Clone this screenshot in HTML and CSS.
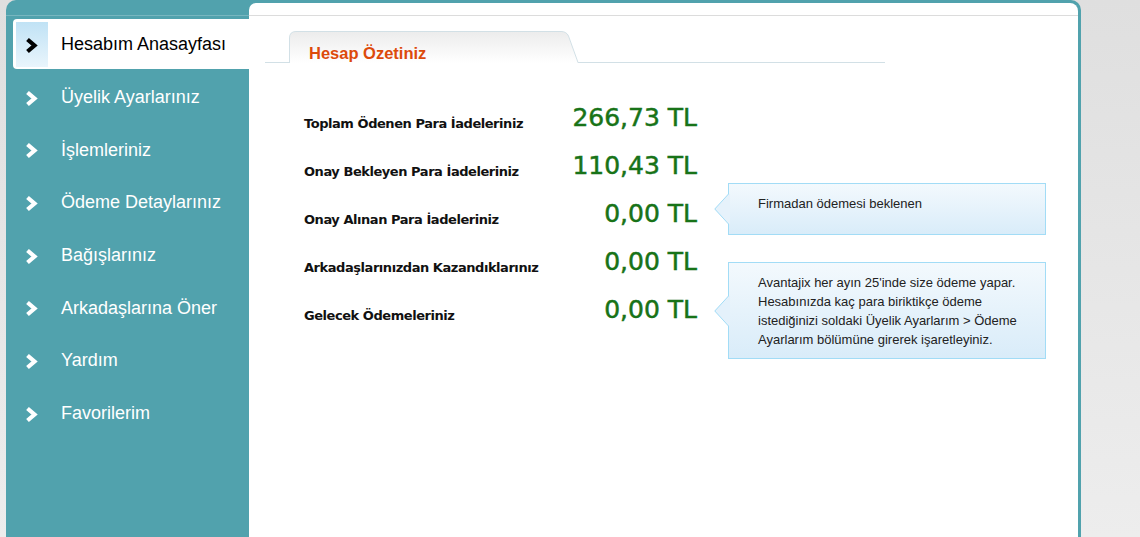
FILE: index.html
```html
<!DOCTYPE html>
<html lang="tr">
<head>
<meta charset="utf-8">
<title>Hesabım</title>
<link rel="stylesheet" href="styles.css">
</head>
<body>
<div class="frame">
  <aside class="sidebar">
    <div class="side-top"></div>
    <ul class="menu">
      <li class="item active"><div class="link"><span class="ico"><svg viewBox="0 0 13 17" width="13" height="17"><polyline points="2.5,2.5 9.5,8.5 2.5,14.5"/></svg></span><span class="lbl">Hesabım Anasayfası</span></div></li>
      <li class="item"><div class="link"><span class="ico"><svg viewBox="0 0 13 17" width="13" height="17"><polyline points="2.5,2.5 9.5,8.5 2.5,14.5"/></svg></span><span class="lbl">Üyelik Ayarlarınız</span></div></li>
      <li class="item"><div class="link"><span class="ico"><svg viewBox="0 0 13 17" width="13" height="17"><polyline points="2.5,2.5 9.5,8.5 2.5,14.5"/></svg></span><span class="lbl">İşlemleriniz</span></div></li>
      <li class="item"><div class="link"><span class="ico"><svg viewBox="0 0 13 17" width="13" height="17"><polyline points="2.5,2.5 9.5,8.5 2.5,14.5"/></svg></span><span class="lbl">Ödeme Detaylarınız</span></div></li>
      <li class="item"><div class="link"><span class="ico"><svg viewBox="0 0 13 17" width="13" height="17"><polyline points="2.5,2.5 9.5,8.5 2.5,14.5"/></svg></span><span class="lbl">Bağışlarınız</span></div></li>
      <li class="item"><div class="link"><span class="ico"><svg viewBox="0 0 13 17" width="13" height="17"><polyline points="2.5,2.5 9.5,8.5 2.5,14.5"/></svg></span><span class="lbl">Arkadaşlarına Öner</span></div></li>
      <li class="item"><div class="link"><span class="ico"><svg viewBox="0 0 13 17" width="13" height="17"><polyline points="2.5,2.5 9.5,8.5 2.5,14.5"/></svg></span><span class="lbl">Yardım</span></div></li>
      <li class="item"><div class="link"><span class="ico"><svg viewBox="0 0 13 17" width="13" height="17"><polyline points="2.5,2.5 9.5,8.5 2.5,14.5"/></svg></span><span class="lbl">Favorilerim</span></div></li>
    </ul>
  </aside>
  <main class="main">
    <div class="main-top"></div>
    <div class="tabbar">
      <div class="tab">
        <svg class="tab-bg" viewBox="0 0 290 32" width="290" height="32" preserveAspectRatio="none">
          <defs>
            <linearGradient id="tg" x1="0" y1="0" x2="0" y2="1">
              <stop offset="0" stop-color="#ececec"/>
              <stop offset="1" stop-color="#ffffff"/>
            </linearGradient>
          </defs>
          <path d="M0.5,32 L0.5,7 Q0.5,0.5 7,0.5 L272,0.5 Q277.5,0.5 279.5,5 L289,32 Z" fill="url(#tg)"/>
          <path d="M0.5,32 L0.5,7 Q0.5,0.5 7,0.5 L272,0.5 Q277.5,0.5 279.5,5 L289,31.5" fill="none" stroke="#d2e0e6" stroke-width="1"/>
        </svg>
        <span class="tab-title">Hesap Özetiniz</span>
      </div>
    </div>
    <div class="summary">
      <div class="rows">
        <div class="row"><span class="label">Toplam Ödenen Para İadeleriniz</span><span class="value">266,73 TL</span></div>
        <div class="row"><span class="label">Onay Bekleyen Para İadeleriniz</span><span class="value">110,43 TL</span></div>
        <div class="row"><span class="label">Onay Alınan Para İadeleriniz</span><span class="value">0,00 TL</span></div>
        <div class="row"><span class="label">Arkadaşlarınızdan Kazandıklarınız</span><span class="value">0,00 TL</span></div>
        <div class="row"><span class="label">Gelecek Ödemeleriniz</span><span class="value">0,00 TL</span></div>
      </div>
      <div class="notes">
        <div class="note note-short">
          <svg class="note-arrow" viewBox="0 0 16 30" width="16" height="30"><polygon points="14.5,0 0.5,15 14.5,30 16,30 16,0" fill="#e6f2fb"/><polyline points="14.5,0 0.8,15 14.5,30" fill="none" stroke="#a2dcf6" stroke-width="1"/></svg>
          Firmadan ödemesi beklenen
        </div>
        <div class="note note-long">
          <svg class="note-arrow" viewBox="0 0 16 30" width="16" height="30"><polygon points="14.5,0 0.5,15 14.5,30 16,30 16,0" fill="#e4f1fb"/><polyline points="14.5,0 0.8,15 14.5,30" fill="none" stroke="#a2dcf6" stroke-width="1"/></svg>
          Avantajix her ayın 25'inde size ödeme yapar.<br>Hesabınızda kaç para biriktikçe ödeme<br>istediğinizi soldaki Üyelik Ayarlarım &gt; Ödeme<br>Ayarlarım bölümüne girerek işaretleyiniz.
        </div>
      </div>
    </div>
  </main>
</div>
</body>
</html>
```
FILE: styles.css
```css
html, body {
  margin: 0;
  padding: 0;
  height: 100%;
}
body {
  background: linear-gradient(#dfdfdf, #ededed);
  font-family: "Liberation Sans", Arial, sans-serif;
  overflow: hidden;
}
.frame {
  margin-left: 6px;
  width: 1075px;
  height: 537px;
  background: #51a2ad;
  border-radius: 10px 10px 0 0;
  display: flex;
}
.sidebar {
  width: 243px;
  flex: none;
}
.side-top {
  height: 15px;
  border-bottom: 1px solid rgba(255, 255, 255, 0.22);
}
.menu {
  list-style: none;
  margin: 0;
  padding: 2px 0 0 0;
}
.item {
  height: 52.7px;
  display: flex;
  align-items: center;
}
.link {
  margin-left: 7px;
  flex: 1;
  height: 50px;
  box-sizing: border-box;
  padding: 3px 0 2px 3px;
  display: flex;
  align-items: stretch;
  border-radius: 4px 0 0 4px;
}
.ico {
  width: 32px;
  flex: none;
  display: flex;
  align-items: center;
  justify-content: center;
  padding-right: 2px;
  padding-top: 1px;
  box-sizing: border-box;
}
.ico svg polyline {
  fill: none;
  stroke: #ffffff;
  stroke-width: 4.2;
  stroke-linecap: butt;
  stroke-linejoin: miter;
}
.lbl {
  margin-left: 13px;
  display: flex;
  align-items: center;
  color: #ffffff;
  font-size: 18px;
  padding-top: 1px;
  padding-bottom: 1px;
}
.active .link {
  background: #ffffff;
}
.active .ico {
  background: linear-gradient(#c0e2f5, #e9f5fc);
}
.active .ico svg polyline {
  stroke: #000000;
}
.active .lbl {
  color: #000000;
}
.main {
  flex: 1;
  margin: 3px 3px 0 0;
  background: #ffffff;
  border-radius: 7px 8px 0 0;
}
.main-top {
  height: 12px;
  border-bottom: 1px solid #dcdcdc;
}
.tabbar {
  margin-left: 16px;
  width: 620px;
  padding: 15px 0 0 24px;
  box-sizing: border-box;
  border-bottom: 1px solid #d2e0e6;
  display: flex;
}
.tab {
  position: relative;
  width: 290px;
  height: 32px;
  margin-bottom: -1px;
}
.tab-bg {
  position: absolute;
  left: 0;
  top: 0;
}
.tab-title {
  position: relative;
  display: block;
  padding: 13px 0 0 20px;
  line-height: 18px;
  font-size: 16.5px;
  font-weight: bold;
  color: #dd4a0b;
}
.summary {
  display: flex;
  padding-left: 55px;
  margin-top: 31px;
}
.rows {
  width: 394px;
  flex: none;
}
.row {
  height: 48px;
  display: flex;
  justify-content: space-between;
  align-items: flex-end;
}
.label {
  font-family: "DejaVu Sans", Verdana, sans-serif;
  font-weight: bold;
  font-size: 13px;
  letter-spacing: -0.45px;
  line-height: 16px;
  padding-bottom: 10px;
  color: #111111;
}
.value {
  font-family: "DejaVu Sans", Verdana, sans-serif;
  font-size: 25px;
  line-height: 48px;
  color: #187318;
  -webkit-text-stroke: 0.5px #187318;
  padding-right: 1px;
}
.notes {
  margin-left: 30px;
  width: 318px;
  flex: none;
  display: flex;
  flex-direction: column;
}
.note {
  position: relative;
  border: 1px solid #a2dcf6;
  background: linear-gradient(#f3f9fd, #d9ecf9);
  font-size: 13px;
  line-height: 19px;
  color: #222222;
  white-space: nowrap;
  padding: 10px 20px 0 29px;
  box-sizing: border-box;
}
.note-short {
  margin-top: 89px;
  height: 52px;
}
.note-long {
  margin-top: 27px;
  height: 97px;
}
.note-arrow {
  position: absolute;
  left: -15px;
  top: 50%;
  margin-top: -15px;
}
```
